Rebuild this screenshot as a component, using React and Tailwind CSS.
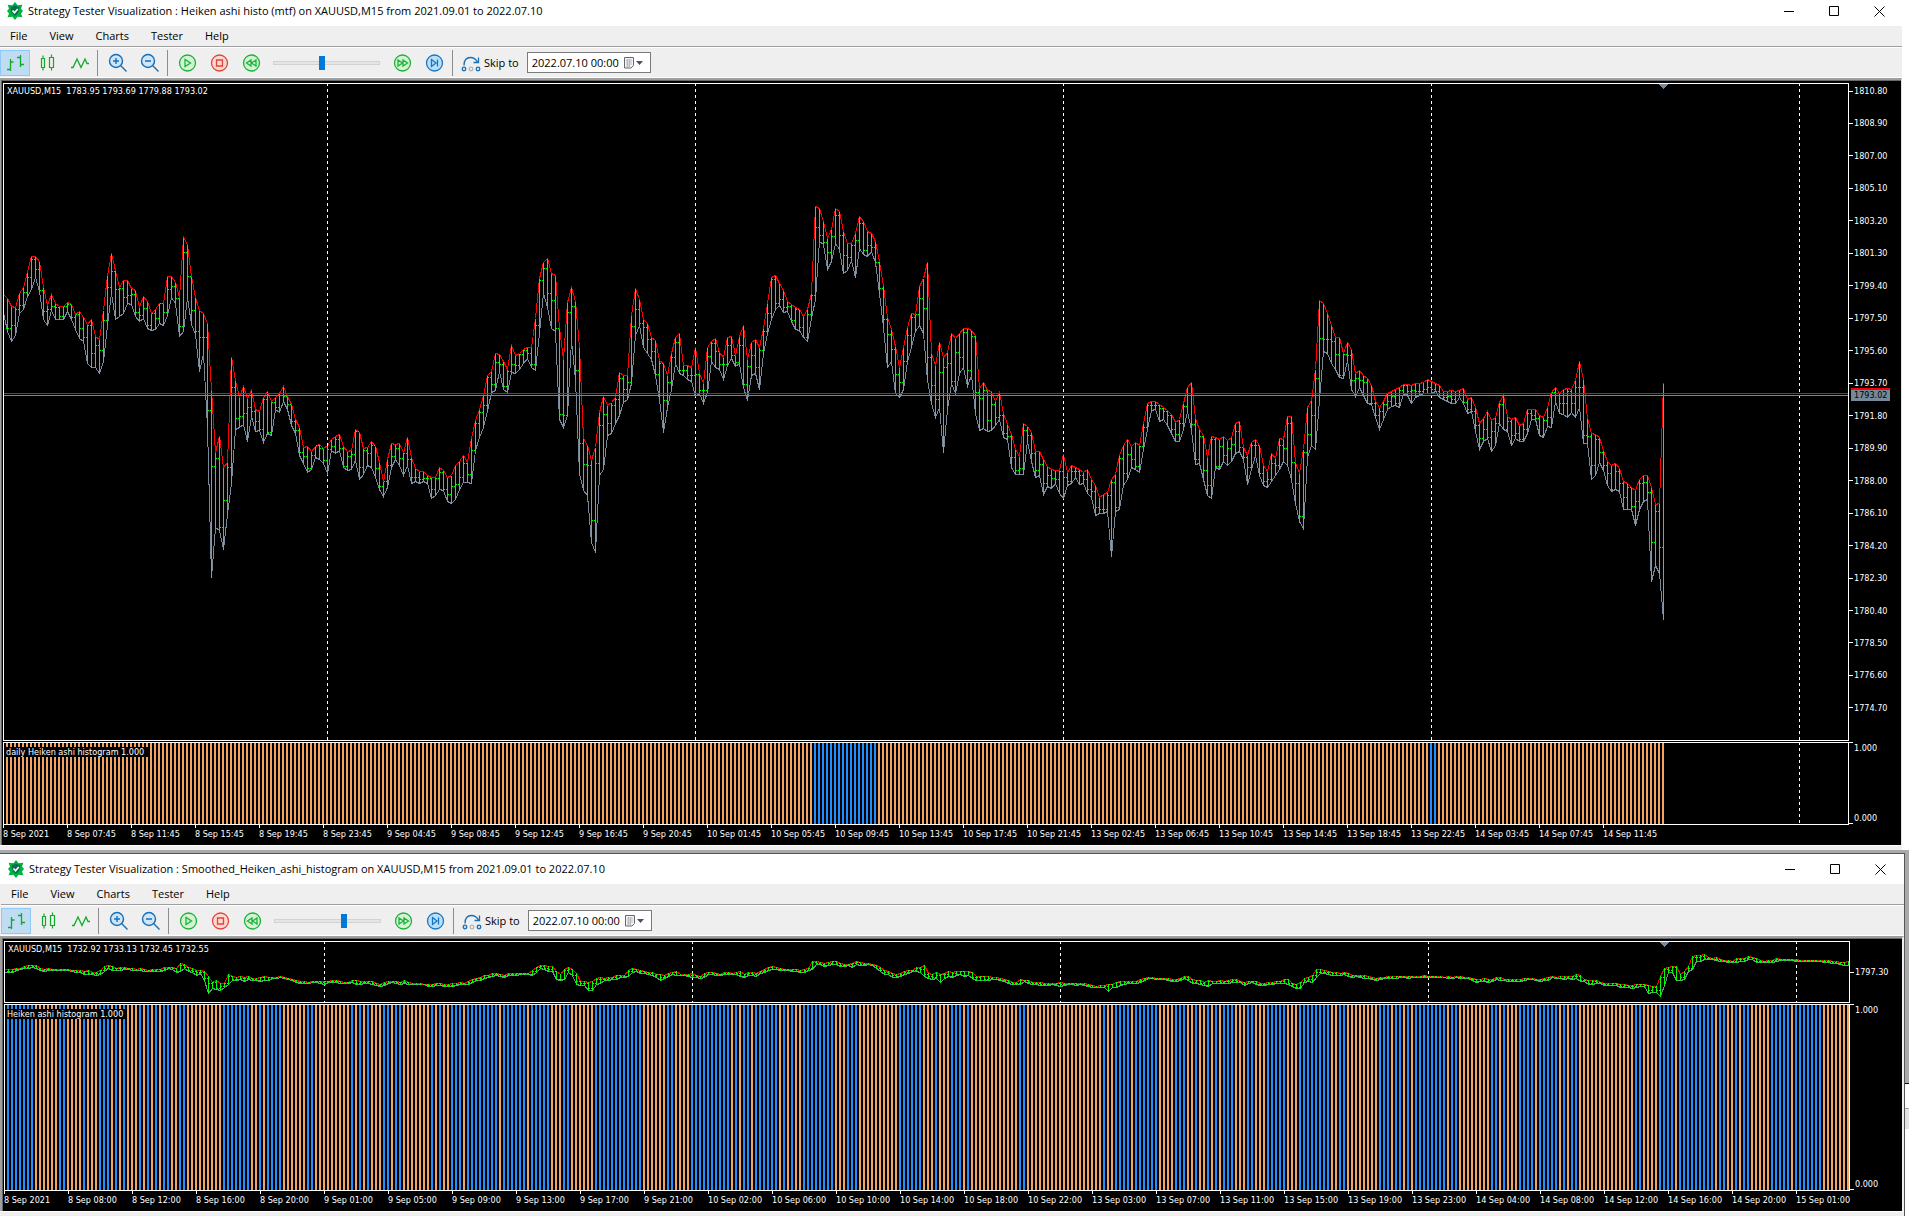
import clsx from "clsx";

const UI_FONT = "font-['Open_Sans','Segoe_UI',sans-serif]";
const CHART_FONT = "font-['DejaVu_Sans_Condensed','Noto_Sans',Tahoma,sans-serif]";

const BAR_STEP = 4;

// high, low, close for every M15 bar, in steps below the top reference price
const BARS = [
    294,392,385, 318,424,376, 320,406,328, 280,338,316, 262,328,276, 215,288,232, 167,268,178, 167,230,206, 182,272,271, 262,358,334,
    315,376,328, 281,330,319, 310,358,322, 317,358,349, 317,358,319, 305,334,313, 312,358,352, 342,388,343, 334,415,385, 350,424,412,
    372,488,376, 356,502,460, 408,502,436, 416,520,450, 330,484,361, 225,376,262, 158,280,214, 210,358,268, 262,347,265, 241,340,290,
    241,310,286, 264,312,283, 269,349,337, 320,364,346, 288,354,325, 302,384,376, 338,391,340, 326,388,355, 308,368,310, 310,376,337,
    227,346,268, 227,290,259, 245,308,295, 290,409,379, 110,392,157, 132,290,229, 228,373,331, 292,402,394, 330,514,412, 338,458,412,
    370,682,631, 570,1130,799, 755,980,773, 708,990,982, 802,1048,901, 785,942,802, 470,850,562, 540,686,655, 592,682,649, 558,672,640,
    595,724,622, 570,648,634, 628,692,664, 634,690,688, 590,727,598, 572,698,697, 603,704,606, 592,628,622, 580,635,586, 558,604,589,
    587,628,612, 612,676,664, 656,700,691, 682,766,757, 742,790,769, 737,815,805, 754,806,766, 738,770,736, 731,776,745, 745,790,781,
    735,818,746, 716,750,739, 708,760,716, 702,750,745, 738,800,798, 754,811,768, 750,806,762, 686,780,693, 697,838,802, 745,822,750,
    740,794,758, 722,800,736, 738,830,805, 786,868,859, 842,889,844, 778,862,796, 728,800,768, 731,776,745, 728,796,775, 757,826,760,
    710,794,778, 770,848,832, 805,842,830, 814,850,838, 812,844,834, 824,850,834, 830,895,868, 832,886,834, 802,866,815, 810,870,868,
    830,904,883, 826,910,858, 796,896,852, 782,868,832, 764,846,788, 785,847,822, 715,848,750, 660,750,670, 628,710,637, 585,682,616,
    526,632,532, 514,576,553, 458,570,487, 461,512,493, 482,568,559, 508,575,514, 436,516,493, 465,518,496, 458,506,461, 446,488,451,
    442,474,460, 442,502,493, 355,511,376, 235,400,241, 185,280,205, 173,322,278, 218,385,301, 224,394,385, 385,658,643, 478,680,646,
    305,646,337, 260,420,319, 303,538,511, 440,820,730, 715,869,793, 736,884,796, 780,1025,961, 742,1055,788, 635,826,676, 587,808,643,
    614,706,670, 606,698,616, 592,670,598, 515,646,535, 526,606,568, 524,596,547, 345,550,379, 263,404,328, 296,376,370, 358,440,382,
    368,458,418, 410,476,454, 420,526,523, 480,598,489, 488,695,601, 525,622,547, 458,568,472, 410,490,427, 398,520,511, 496,524,511,
    496,536,526, 500,542,526, 442,588,523, 520,580,571, 548,610,571, 442,576,469, 424,482,430, 413,500,454, 455,508,493, 470,538,493,
    412,494,436, 409,474,466, 466,499,487, 408,490,436, 374,560,553, 478,601,499, 426,524,466, 418,518,502, 440,566,451, 385,460,394,
    310,400,340, 232,356,238, 224,326,310, 250,316,298, 269,337,322, 302,332,319, 312,362,361, 322,388,328, 326,391,382, 348,412,412,
    326,422,343, 280,355,284, 19,298,82, 23,122,104, 64,132,127, 115,206,157, 86,182,109, 25,130,46, 32,148,106, 94,220,166,
    130,210,172, 130,180,136, 98,230,121, 47,145,70, 62,162,151, 92,168,136, 100,154,142, 122,186,187, 182,280,265, 256,380,358,
    350,500,403, 388,484,448, 438,580,523, 500,590,547, 442,566,484, 380,482,406, 338,440,352, 341,392,343, 258,374,295, 235,400,325,
    187,540,472, 460,608,556, 496,652,598, 426,622,517, 472,755,500, 456,628,490, 398,550,544, 414,578,457, 398,520,470, 383,502,397,
    383,559,511, 390,526,409, 404,640,577, 565,690,595, 545,684,571, 570,694,661, 572,690,613, 604,674,652, 575,656,646, 638,710,700,
    672,716,709, 702,800,772, 748,823,811, 768,823,805, 670,823,691, 678,724,706, 695,784,760, 754,830,811, 754,826,793, 778,883,850,
    798,858,826, 808,864,834, 811,850,838, 811,878,812, 762,895,832, 815,856,844, 795,848,814, 802,832,814, 808,853,826, 815,850,838,
    808,878,868, 838,890,874, 854,946,922, 890,940,928, 883,940,928, 876,932,886, 836,1067,847, 822,934,922, 765,928,775, 736,856,820,
    716,838,763, 738,802,778, 727,806,799, 735,815,737, 670,748,680, 610,688,616, 604,630,616, 602,628,616, 612,664,625, 620,658,634,
    630,676,646, 642,698,686, 667,724,703, 656,724,668, 608,688,619, 562,634,580, 545,690,673, 655,793,778, 686,788,709, 704,838,811,
    770,884,856, 709,895,716, 712,802,799, 718,808,739, 708,784,766, 721,794,745, 710,784,733, 670,760,694, 664,754,742, 742,778,772,
    766,853,802, 726,806,736, 718,766,736, 734,826,820, 795,856,844, 814,860,838, 758,844,790, 775,824,796, 714,806,736, 718,784,745,
    647,796,670, 647,836,787, 785,908,850, 820,962,949, 748,985,757, 622,772,703, 600,734,646, 508,748,535, 301,600,415, 308,454,418,
    338,458,418, 374,490,424, 412,508,463, 412,530,526, 458,535,463, 425,480,466, 446,568,541, 520,589,535, 510,560,541, 526,586,547,
    534,608,608, 554,612,608, 604,650,646, 622,686,634, 602,656,613, 580,628,604, 572,618,589, 566,616,610, 560,620,571, 551,580,556,
    551,586,574, 556,610,571, 548,590,574, 550,584,574, 547,578,566, 536,578,562, 542,580,568, 548,574,572, 554,590,586, 572,596,590,
    573,602,588, 571,608,598, 574,610,580, 571,592,584, 565,610,606, 596,638,626, 590,634,632, 622,692,676, 668,748,715, 653,722,688,
    632,714,712, 660,754,694, 650,734,668, 606,670,612, 584,688,686, 648,692,664, 658,736,706, 652,714,698, 676,724,718, 668,722,686,
    628,698,638, 628,656,646, 628,658,654, 646,706,704, 650,712,660, 622,678,652, 576,680,576, 560,604,578, 578,640,610, 568,642,610,
    565,652,574, 568,636,610, 540,652,562, 484,620,562, 538,730,706, 655,728,708, 698,836,794, 702,826,718, 710,786,756, 750,810,796,
    784,856,820, 794,874,868, 788,868,814, 804,874,848, 842,928,890, 850,928,862, 860,926,919, 870,976,904, 836,928,848, 826,902,847,
    826,896,877, 860,1144,1027, 912,1096,934, 910,1120,1040, 550,1258,586,
];

// the bars that follow in the second window, in thirds of a pixel of its price pane
const LATER_BARS = [
    745,795,746, 741,755,750, 739,755,741, 738,781,780, 762,781,770, 752,778,758, 738,752,745, 709,748,712, 706,722,710,
    706,722,708, 701,718,713, 710,718,714, 713,717,716, 712,720,718, 718,724,720, 719,724,722, 720,727,722, 722,726,724,
    715,727,718, 714,722,718, 713,722,715, 709,717,712, 710,716,715, 714,726,722, 720,726,724, 722,727,724, 721,726,723,
    720,727,720, 715,722,718, 716,720,718, 716,721,717, 716,720,718, 716,720,719, 718,722,720, 720,724,722, 720,724,721,
    720,723,721, 719,724,721, 720,724,722, 720,724,722, 720,725,723, 721,727,724, 722,728,726, 724,730,728, 725,731,727,
    725,736,734, 724,735,728,
];

const toBars = (flat, scale) => {
    const out = [];
    for (let i = 0; i < flat.length; i += 3) {
        out.push(flat.slice(i, i + 3).map((v) => Math.round(scale(v))));
    }
    return out;
};

// run lengths of equal colour, starting with orange
const toColors = (runs) => runs.flatMap((n, i) => Array(n).fill(i % 2 ? "#1e90ff" : "#f4a460"));

const dailyBars = toBars(BARS, (v) => 116 + v / 3);
const smoothedBars = [
    ...toBars(BARS.slice(3), (v) => 18 + v * 0.0288),
    ...toBars(LATER_BARS, (v) => v / 3 - 222),
];

const dailyColors = toColors([202, 16, 138, 2, 57]);
const smoothedColors = toColors([
    0, 7, 6, 2, 4, 1, 3, 3, 1, 1, 1, 1, 3, 1, 1, 1, 1, 1, 1, 2, 2, 2, 9, 7, 2, 1, 1, 4, 6, 2, 9, 1, 1, 1, 1, 1, 3, 2, 1, 2, 7, 1, 1, 1, 2, 3,
    1, 8, 1, 6, 1, 5, 3, 2, 6, 12, 6, 2, 4, 10, 1, 1, 1, 2, 1, 6, 1, 1, 1, 1, 2, 8, 3, 3, 10, 6, 3, 1, 3, 3, 1, 1, 12, 2, 19, 1, 2, 4, 1, 6,
    4, 3, 2, 1, 2, 1, 1, 1, 1, 3, 3, 2, 3, 5, 3, 8, 2, 2, 8, 3, 1, 2, 1, 1, 1, 8, 1, 2, 8, 2, 1, 1, 3, 4, 1, 5, 1, 1, 1, 2, 14, 2, 4, 4, 1,
    9, 1, 2, 2, 1, 1, 2, 5, 5, 1, 7, 7,
]);

const DAILY_TIMES = [
    "8 Sep 2021", "8 Sep 07:45", "8 Sep 11:45", "8 Sep 15:45", "8 Sep 19:45", "8 Sep 23:45", "9 Sep 04:45", "9 Sep 08:45", "9 Sep 12:45",
    "9 Sep 16:45", "9 Sep 20:45", "10 Sep 01:45", "10 Sep 05:45", "10 Sep 09:45", "10 Sep 13:45", "10 Sep 17:45", "10 Sep 21:45",
    "13 Sep 02:45", "13 Sep 06:45", "13 Sep 10:45", "13 Sep 14:45", "13 Sep 18:45", "13 Sep 22:45", "14 Sep 03:45", "14 Sep 07:45", "14 Sep 11:45",
];

const SMOOTHED_TIMES = [
    "8 Sep 2021", "8 Sep 08:00", "8 Sep 12:00", "8 Sep 16:00", "8 Sep 20:00", "9 Sep 01:00", "9 Sep 05:00", "9 Sep 09:00", "9 Sep 13:00",
    "9 Sep 17:00", "9 Sep 21:00", "10 Sep 02:00", "10 Sep 06:00", "10 Sep 10:00", "10 Sep 14:00", "10 Sep 18:00", "10 Sep 22:00",
    "13 Sep 03:00", "13 Sep 07:00", "13 Sep 11:00", "13 Sep 15:00", "13 Sep 19:00", "13 Sep 23:00", "14 Sep 04:00", "14 Sep 08:00",
    "14 Sep 12:00", "14 Sep 16:00", "14 Sep 20:00", "15 Sep 01:00",
];

const DAILY_PRICES = [
    "1810.80", "1808.90", "1807.00", "1805.10", "1803.20", "1801.30", "1799.40", "1797.50", "1795.60", "1793.70",
    "1791.80", "1789.90", "1788.00", "1786.10", "1784.20", "1782.30", "1780.40", "1778.50", "1776.60", "1774.70",
];

const MENU = ["File", "View", "Charts", "Tester", "Help"];

/* ---------- icons ---------- */

const Logo = () => (
    <svg className="h-[18px] w-4" viewBox="0 0 16 18" aria-hidden="true">
        <path d="M8 0l2.6 3.2 4.8-.4-1.4 3.6L16 9l-2 2.6 1.4 3.6-4.8-.4L8 18l-2.6-3.2-4.8.4L2 11.6 0 9l2-2.6L.6 2.8l4.8.4z" fill="#00b33c" />
        <path d="M8 3.500c1.500 1 2.800 1.200 4.300 1.200 0 4.300-.8 7-4.300 9-3.500-2-4.300-4.700-4.300-9C5.200 4.700 6.500 4.500 8 3.500z" fill="#0a6e50" />
        <path d="M5.500 8.500l2 2.200 3.300-3.800" fill="none" stroke="#fff" strokeWidth="1.600" />
    </svg>
);

const BarsIcon = () => (
    <svg className="h-5 w-5" viewBox="0 0 20 20" fill="none" stroke="#12a82c" strokeWidth="1.300" aria-hidden="true">
        <path d="M5.500 6v12M2 16.500h3.500M5.500 9h3M15.500 2v12M12 4.500h3.500M15.500 11.500H19" />
    </svg>
);

const CandlesIcon = () => (
    <svg className="h-5 w-5" viewBox="0 0 20 20" fill="none" stroke="#12a82c" strokeWidth="1.200" aria-hidden="true">
        <path d="M4.500 5.500h3v9h-3zM6 2.500v3M6 14.500v3M12.500 4.500h4v10h-4zM14.500 1.500v3M14.500 14.500v3" />
    </svg>
);

const LineIcon = () => (
    <svg className="h-5 w-5" viewBox="0 0 20 20" fill="none" stroke="#12a82c" strokeWidth="1.300" aria-hidden="true">
        <path d="M2 14.500h2L8 6l4 8.500 4-8.500 2 4.500h2" />
    </svg>
);

const ZoomIcon = ({ plus }) => (
    <svg className="h-5 w-5" viewBox="-1 0 20 20" fill="none" stroke="#1a6fb5" strokeWidth="1.400" aria-hidden="true">
        <circle cx="8" cy="8" r="6.500" fill="#cde6fa" />
        <path d="M12.800 12.800L18.500 18.500M5 8h6" />
        {plus ? <path d="M8 5v6" /> : null}
    </svg>
);

const ROUND_TONES = {
    green: ["#1cb23a", "#d3f3d3"],
    red: ["#e0453c", "#fdd9d2"],
    blue: ["#1a76bf", "#b9e0fb"],
};

const RoundIcon = ({ tone, d }) => (
    <svg className="h-5 w-5" viewBox="0 0 20 20" fill="none" stroke={ROUND_TONES[tone][0]} strokeWidth="1.300" aria-hidden="true">
        <circle cx="10.500" cy="10" r="8" fill={ROUND_TONES[tone][1]} />
        <path d={d} />
    </svg>
);

const SkipIcon = () => (
    <svg className="h-5 w-5" viewBox="0 0 20 20" fill="none" stroke="#1a6fb5" strokeWidth="1.300" aria-hidden="true">
        <path d="M3 12.500C3 7 6 4.500 9.500 4.500c3.500 0 5.500 2 7 4.500M17.500 4.500v5h-5" />
        <circle cx="3" cy="16" r="1.800" fill="#cde6fa" />
        <circle cx="10" cy="16" r="1.800" stroke="#b5b5b5" />
        <circle cx="17" cy="16" r="1.800" fill="#cde6fa" />
    </svg>
);

const CalendarIcon = () => (
    <svg className="h-4 w-5" viewBox="0 0 20 16" aria-hidden="true">
        <path d="M1.500 2.500h9v8l-2.500 2.500H1.500z" fill="#f4f4f4" stroke="#6b6470" />
        <path d="M3 5h6M3 7h6M3 9h6M3 11h4M4.500 4v8M6.500 4v8" stroke="#b0b0b8" strokeWidth=".8" />
        <path d="M13 6h7l-3.500 4z" fill="#44546a" />
    </svg>
);

/* ---------- window chrome ---------- */

const TitleBar = ({ title, className }) => (
    <header className={clsx("flex items-center bg-white", className)}>
        <Logo />
        <h1 className="ml-[5px] grow text-[11px] leading-4 text-black">{title}</h1>
        <button className="flex w-[45px] justify-center" aria-label="Minimize">
            <svg className="h-[11px] w-[11px]" viewBox="0 0 11 11" shapeRendering="crispEdges"><path d="M0 5h10v1H0z" /></svg>
        </button>
        <button className="flex w-[45px] justify-center" aria-label="Maximize">
            <svg className="h-[11px] w-[11px]" viewBox="0 0 11 11" fill="none" stroke="#000"><path d="M.5.5h9v9h-9z" /></svg>
        </button>
        <button className="flex w-[45px] justify-center" aria-label="Close">
            <svg className="h-[11px] w-[11px]" viewBox="0 0 11 11" stroke="#000"><path d="M.5.5l10 10M10.500.5l-10 10" /></svg>
        </button>
    </header>
);

const MenuBar = () => (
    <nav className="flex h-5 items-center gap-[22px] border-b border-[#a0a0a0] bg-[#efefef] pl-[10px] box-content">
        {MENU.map((item) => (
            <button key={item} className="text-[11px] leading-4 text-black">{item}</button>
        ))}
    </nav>
);

const ToolButton = ({ label, active, children }) => (
    <button
        aria-label={label}
        className={clsx("flex h-[26px] w-[30px] items-center justify-center border", active ? "border-[#90c8f6] bg-[#c0dcf3]" : "border-transparent")}
    >
        {children}
    </button>
);

const Separator = () => <div className="ml-px mr-[2px] h-[26px] w-px bg-[#8c8c8c]" />;

const ToolBar = ({ id, speed }) => (
    <div className="flex h-[31px] items-center gap-[2px] border-y border-white bg-[#efefef]">
        <ToolButton label="Bars" active><BarsIcon /></ToolButton>
        <ToolButton label="Candles"><CandlesIcon /></ToolButton>
        <ToolButton label="Line"><LineIcon /></ToolButton>
        <Separator />
        <ToolButton label="Zoom in"><ZoomIcon plus /></ToolButton>
        <ToolButton label="Zoom out"><ZoomIcon /></ToolButton>
        <Separator />
        <ToolButton label="Play"><RoundIcon tone="green" d="M8 6.500v7l5.500-3.500z" /></ToolButton>
        <ToolButton label="Stop"><RoundIcon tone="red" d="M7.500 7h6v6h-6z" /></ToolButton>
        <ToolButton label="Slower"><RoundIcon tone="green" d="M10 7v6l-4.500-3zM15 7v6l-4.500-3z" /></ToolButton>
        <input
            type="range"
            aria-label="Speed"
            defaultValue={speed}
            className="mx-[5px] h-4 w-[107px] appearance-none bg-transparent [&::-webkit-slider-runnable-track]:h-1 [&::-webkit-slider-runnable-track]:border [&::-webkit-slider-runnable-track]:border-[#d2d2d2] [&::-webkit-slider-runnable-track]:bg-[#e4e6e6] [&::-webkit-slider-thumb]:-mt-[6px] [&::-webkit-slider-thumb]:h-[14px] [&::-webkit-slider-thumb]:w-[6px] [&::-webkit-slider-thumb]:appearance-none [&::-webkit-slider-thumb]:bg-[#0078d7]"
        />
        <ToolButton label="Faster"><RoundIcon tone="green" d="M6 7v6l4.500-3zM11 7v6l4.500-3z" /></ToolButton>
        <ToolButton label="To end"><RoundIcon tone="blue" d="M7.500 6.500v7l4.500-3.500zM13.500 6.500v7" /></ToolButton>
        <Separator />
        <label htmlFor={id} className="ml-1 flex items-center gap-[3px] text-[11px] leading-4 text-black">
            <SkipIcon />
            Skip to
        </label>
        <div className="ml-[6px] flex h-[21px] w-[124px] items-center border border-[#7a7a7a] bg-white pl-1">
            <input id={id} defaultValue="2022.07.10 00:00" className="w-[91px] text-[11px] leading-4 text-black outline-none" />
            <button aria-label="Open calendar"><CalendarIcon /></button>
        </div>
    </div>
);

/* ---------- charts ---------- */

const line = (bars, pick) =>
    bars.map((b, i) => `L${3.5 + i * BAR_STEP} ${b[pick] + 0.5}`).join("");

const DayLines = ({ days }) => (
    <path
        d={days.map((d) => `M${d * BAR_STEP + 3.5} 0V1000`).join("")}
        stroke="#fff"
        strokeDasharray="3 3"
        strokeDashoffset="1"
    />
);

const PriceSvg = ({ bars, days, levels, lead, gap }) => (
    <svg className="block h-full w-full" shapeRendering="crispEdges" fill="none" aria-hidden="true">
        <DayLines days={days} />
        <path d="M1655 0h9l-4.500 5z" fill="#778899" />
        <path d={`M0 ${lead[1]}${line(bars, 1)}`} stroke="#778899" />
        <path d={`M0 ${lead[0]}${line(bars, 0)}`} stroke="#f00" />
        <path
            d={bars
                .map(([high, low, close], i) => {
                    const x = 3 + i * BAR_STEP;
                    const open = i ? bars[i - 1][2] : close;
                    return `M${x} ${high + gap}h1V${low + 1}h-1zM${x - 1} ${open}h1v1h-1zM${x + 1} ${close}h1v1h-1z`;
                })
                .join("")}
            fill="#0f0"
        />
        {levels ? (
            <>
                <path d="M0 309.500h4000" stroke="#f00" />
                <path d="M0 311.500h4000" stroke="#778899" />
            </>
        ) : null}
    </svg>
);

const HistogramSvg = ({ colors, days }) => (
    <svg className="block h-full w-full" shapeRendering="crispEdges" aria-hidden="true">
        <DayLines days={days} />
        {colors.map((color, i) => (
            <rect key={i} x={2 + i * BAR_STEP} y="0" width="2" height="100%" fill={color} />
        ))}
    </svg>
);

const Price = ({ children }) => (
    <div className="flex h-[10px] items-center gap-px">
        <span className="h-px w-1 bg-white" />
        {children}
    </div>
);

const HistogramAxis = () => (
    <div className="flex flex-col justify-between pb-px">
        <div>
            <div className="h-px w-1 bg-white" />
            <div className="pl-[5px]">1.000</div>
        </div>
        <div>
            <div className="pl-[5px]">0.000</div>
            <div className="h-px w-1 bg-white" />
        </div>
    </div>
);

const TimeAxis = ({ times }) => (
    <div className="col-span-2 flex h-5 overflow-hidden">
        {times.map((t) => (
            <div key={t} className="w-16 shrink-0 whitespace-nowrap">
                <div className="h-[3px] w-px bg-white" />
                <div className="mt-px">{t}</div>
            </div>
        ))}
    </div>
);

const Chart = ({ priceHeight, histHeight, caption, histCaption, priceSvg, histSvg, axis, times, axisClass }) => (
    <main className={clsx("grid grid-cols-[minmax(0,1fr)_52px] border-l border-[#696969] bg-black pl-px pt-[2px] text-[9px] leading-[10px] text-white", CHART_FONT)}>
        <section className={clsx("relative mb-px border border-white", priceHeight)}>
            {priceSvg}
            <p className="absolute left-[3px] top-[2px] whitespace-pre">{caption}</p>
        </section>
        <div className={clsx("relative mb-px flex flex-col", axisClass)}>{axis}</div>
        <section className={clsx("relative border border-white", histHeight)}>
            {histSvg}
            <p className="absolute left-[2px] top-1 bg-black pr-1">{histCaption}</p>
        </section>
        <HistogramAxis />
        <TimeAxis times={times} />
    </main>
);

const App = () => (
    <div className={clsx("min-h-screen overflow-hidden bg-[#efefef]", UI_FONT)}>
        <div className="bg-white pr-[7px]">
            <TitleBar title="Strategy Tester Visualization : Heiken ashi histo (mtf) on XAUUSD,M15 from 2021.09.01 to 2022.07.10" className="h-[26px] pb-1 pl-[7px]" />
            <MenuBar />
            <ToolBar id="skip-daily" speed={45} />
            <div className="border-l border-t-2 border-[#a0a0a0] border-r border-r-[#e3e3e3]">
                <div className="h-px bg-[#696969]" />
                <Chart
                    priceHeight="h-[658px]"
                    histHeight="h-[83px]"
                    caption="XAUUSD,M15  1783.95 1793.69 1779.88 1793.02"
                    histCaption="daily Heiken ashi histogram 1.000"
                    priceSvg={<PriceSvg bars={dailyBars} days={[80, 172, 264, 356, 448]} levels lead={[211, 231]} gap={1} />}
                    histSvg={<HistogramSvg colors={dailyColors} days={[448]} />}
                    axisClass="justify-between pb-7 pt-[3px]"
                    axis={
                        <>
                            {DAILY_PRICES.map((p) => <Price key={p}>{p}</Price>)}
                            <div className="absolute left-[2px] top-[305px] h-[13px] w-[39px] border-t-2 border-[#f00] bg-[#778899] pl-[3px] leading-[11px] text-black">1793.02</div>
                        </>
                    }
                    times={DAILY_TIMES}
                />
            </div>
            <div className="h-[5px] border-t border-white bg-[#efefef]" />
        </div>

        <div className="flex bg-[#a9a9a9] pt-[3px]">
            <div className="min-w-0 grow border-r border-t border-[#555]">
                <TitleBar title="Strategy Tester Visualization : Smoothed_Heiken_ashi_histogram on XAUUSD,M15 from 2021.09.01 to 2022.07.10" className="h-[30px] pl-2 pr-px" />
                <div className="bg-[#efefef] pl-px"><MenuBar /></div>
                <div className="bg-[#efefef] pl-px"><ToolBar id="skip-smoothed" speed={67} /></div>
                <div className="border-l-2 border-t-2 border-[#a0a0a0] border-r-2 border-r-[#efefef]">
                    <div className="h-px bg-[#696969]" />
                    <Chart
                        priceHeight="h-[62px]"
                        histHeight="h-[187px]"
                        caption="XAUUSD,M15  1732.92 1733.13 1732.45 1732.55"
                        histCaption="Heiken ashi histogram 1.000"
                        priceSvg={<PriceSvg bars={smoothedBars} days={[79, 171, 263, 355, 447]} lead={[27, 30]} gap={0} />}
                        histSvg={<HistogramSvg colors={smoothedColors} days={[]} />}
                        axisClass="justify-center"
                        axis={<Price>1797.30</Price>}
                        times={SMOOTHED_TIMES}
                    />
                </div>
                <div className="h-[5px] border-t border-white bg-[#efefef]" />
            </div>
            <div className="flex w-1 flex-col">
                <div className="h-[230px]" />
                <div className="h-px bg-black" />
                <div className="h-6 bg-white" />
                <div className="h-px bg-[#a0a0a0]" />
                <div className="h-5 bg-[#e3e3e3]" />
                <div className="grow bg-white" />
            </div>
        </div>
    </div>
);

export default App;
